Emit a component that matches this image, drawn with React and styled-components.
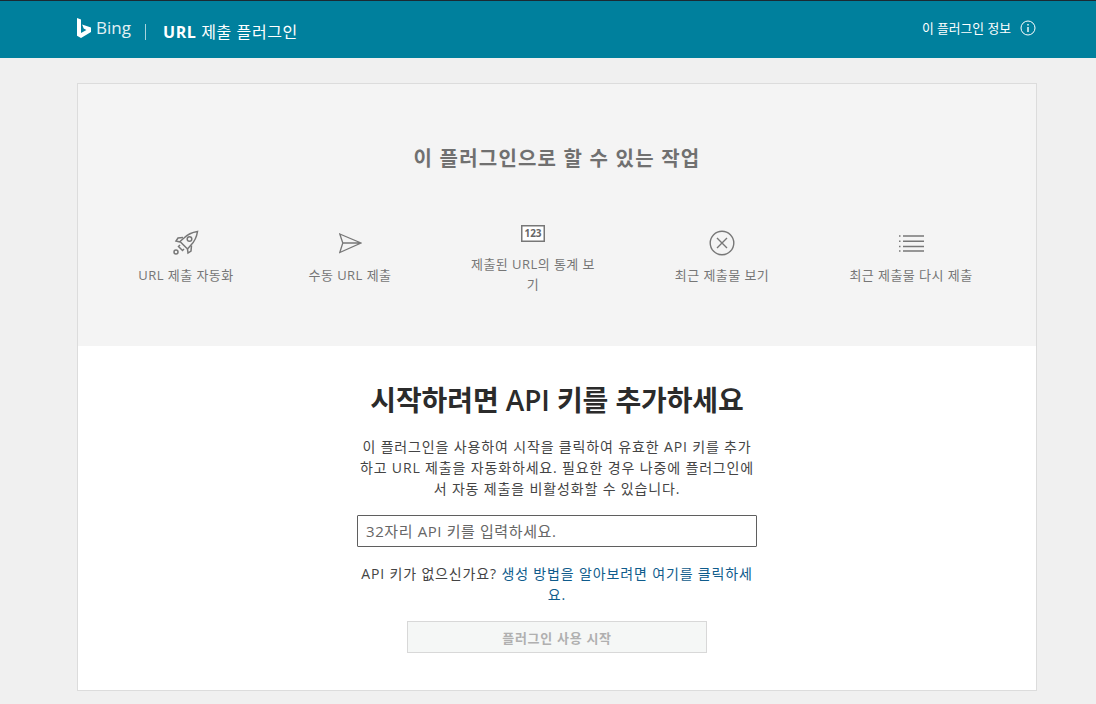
import React from "react";
import styled, { createGlobalStyle } from "styled-components";

const Global = createGlobalStyle`
  html, body {
    margin: 0;
    padding: 0;
    background: #f0f0f0;
    font-family: "Open Sans", "Noto Sans CJK KR", sans-serif;
  }
  * { box-sizing: border-box; }
`;

const Header = styled.header`
  height: 58px;
  background: #00809d;
  border-top: 1px solid #1b2a33;
  display: flex;
  align-items: center;
  justify-content: space-between;
  padding: 0 60px 4px 77px;
  color: #fff;
`;

const Brand = styled.div`
  display: flex;
  align-items: center;
`;

const BingWord = styled.span`
  font-size: 17px;
  margin-left: 4px;
  color: #e3f1f4;
`;

const Divider = styled.span`
  width: 1px;
  height: 16px;
  background: #a8d3dc;
  margin: 9px 17px 0 14px;
`;

const PluginName = styled.span`
  font-size: 16px;
  letter-spacing: 0.6px;
  margin-top: 6px;
  b {
    font-weight: 700;
  }
`;

const About = styled.div`
  display: flex;
  align-items: center;
  gap: 9px;
  font-size: 12.8px;
`;

const Card = styled.main`
  width: 960px;
  height: 608px;
  margin: 25px 0 0 77px;
  border: 1px solid #dcdcdc;
  background: #fff;
`;

const Features = styled.section`
  height: 262px;
  background: #f4f4f4;
  padding-top: 62px;
`;

const FeaturesTitle = styled.h2`
  margin: 0;
  text-align: center;
  font-size: 20px;
  line-height: 26px;
  letter-spacing: 1.2px;
  font-weight: 600;
  color: #707070;
`;

const FeatureRow = styled.div`
  display: grid;
  grid-template-columns: 164px 164px 202px 176px 202px;
  padding-left: 26px;
  margin-top: 57px;
`;

const Feature = styled.div`
  display: flex;
  flex-direction: column;
  align-items: center;
`;

const IconSlot = styled.div`
  height: ${({ $high }) => ($high ? "24px" : "28px")};
  margin-top: ${({ $high }) => ($high ? "-8px" : "0")};
  margin-bottom: ${({ $high }) => ($high ? "9px" : "8px")};
  display: flex;
  align-items: center;
  justify-content: center;
`;

const FeatureLabel = styled.div`
  width: ${({ $wrap }) => ($wrap ? "130px" : "auto")};
  font-size: 13px;
  line-height: 20px;
  letter-spacing: 0.45px;
  color: #767676;
  text-align: center;
  white-space: ${({ $wrap }) => ($wrap ? "normal" : "nowrap")};
  word-break: ${({ $wrap }) => ($wrap ? "break-all" : "normal")};
`;

const Start = styled.section`
  padding-top: 37px;
  display: flex;
  flex-direction: column;
  align-items: center;
`;

const StartTitle = styled.h1`
  margin: 0;
  font-size: 28px;
  line-height: 34px;
  letter-spacing: -0.1px;
  font-weight: 600;
  color: #2b2b2b;
`;

const Intro = styled.p`
  width: 400px;
  margin: 19px 0 0;
  font-size: 14px;
  line-height: 21px;
  letter-spacing: 0.85px;
  word-break: break-all;
  color: #444;
  text-align: center;
`;

const KeyInput = styled.input`
  width: 400px;
  height: 32px;
  margin-top: 16px;
  padding: 0 8px;
  border: 1px solid #5f5f5f;
  border-radius: 1px;
  background: #fff;
  font: inherit;
  font-size: 15px;
  letter-spacing: 0.6px;
  color: #555;
  &::placeholder {
    color: #666;
    opacity: 1;
  }
`;

const Help = styled.p`
  width: 400px;
  margin: 16px 0 0;
  font-size: 14px;
  line-height: 21px;
  letter-spacing: 0.85px;
  word-break: break-all;
  color: #444;
  text-align: center;
`;

const HelpLink = styled.a`
  color: #0f5c8c;
  text-decoration: none;
`;

const StartButton = styled.button`
  width: 300px;
  height: 32px;
  margin-top: 16px;
  border: 1px solid #d8d8d8;
  background: #f5f7f6;
  font: inherit;
  font-size: 13px;
  letter-spacing: 0.7px;
  font-weight: 600;
  color: #b0b0b0;
`;

const BingLogo = () => (
  <svg width="15" height="20" viewBox="0 0 15 20">
    <path d="M0 0l4 1.400v13.600l5.400-3.100-2.700-1.300-1.600-4L14 9.400v4.600L4 20 0 17.700z" fill="#fff" />
  </svg>
);

const InfoIcon = () => (
  <svg width="16" height="16" viewBox="0 0 16 16" fill="none" stroke="#fff">
    <circle cx="8" cy="8" r="7" />
    <path d="M8 7v5" strokeWidth="1.400" />
    <path d="M8 4v1.500" strokeWidth="1.400" />
  </svg>
);

const RocketIcon = () => (
  <svg width="26" height="26" viewBox="0 0 26 26" fill="none" stroke="#777" strokeWidth="1.500">
    <path d="M24.500 1.500C18 2.500 14 5 11 8l-4 3.500 7.500 7.500 3.500-4c3-3 5.500-7 6.500-13.500z" />
    <circle cx="16.500" cy="9" r="2.300" />
    <path d="M10 7.500L5 8l-2 3 4 1M18.500 15.500L18 21l-3 2-.5-4" />
    <path d="M7 15l-1.500 1.500 4 4L11 19" />
    <circle cx="3" cy="22" r="2" />
  </svg>
);

const SendIcon = () => (
  <svg width="23" height="21" viewBox="0 0 23 21" fill="none" stroke="#777" strokeWidth="1.300">
    <path d="M.8 1L22 10 .8 19.500 3.800 10zM3.800 10H22" />
  </svg>
);

const CountIcon = () => (
  <svg width="24" height="17" viewBox="0 0 24 17">
    <rect x=".75" y=".75" width="22.500" height="15.500" fill="#fff" stroke="#777" strokeWidth="1.500" />
    <text x="12" y="12" fontSize="10" fontWeight="700" textAnchor="middle" fill="#666" fontFamily="Open Sans, sans-serif">123</text>
  </svg>
);

const CloseCircleIcon = () => (
  <svg width="26" height="26" viewBox="0 0 26 26" fill="none" stroke="#777" strokeWidth="1.400">
    <circle cx="13" cy="13" r="11.800" />
    <path d="M8 8l10 10M18 8L8 18" />
  </svg>
);

const ListIcon = () => (
  <svg width="25" height="17" viewBox="0 0 25 17" stroke="#777" strokeWidth="1.500">
    <path d="M4 1h21M4 6.300h21M4 11.500h21M4 16h21" />
    <path d="M0 1h1.500M0 6.300h1.500M0 11.500h1.500M0 16h1.500" />
  </svg>
);

const features = [
  { label: "URL 제출 자동화", icon: <RocketIcon /> },
  { label: "수동 URL 제출", icon: <SendIcon /> },
  { label: "제출된 URL의 통계 보기", icon: <CountIcon />, high: true, wrap: true },
  { label: "최근 제출물 보기", icon: <CloseCircleIcon /> },
  { label: "최근 제출물 다시 제출", icon: <ListIcon /> },
];

export default function App() {
  return (
    <>
      <Global />
      <Header>
        <Brand>
          <BingLogo />
          <BingWord>Bing</BingWord>
          <Divider />
          <PluginName><b>URL</b> 제출 플러그인</PluginName>
        </Brand>
        <About>
          이 플러그인 정보
          <InfoIcon />
        </About>
      </Header>
      <Card>
        <Features>
          <FeaturesTitle>이 플러그인으로 할 수 있는 작업</FeaturesTitle>
          <FeatureRow>
            {features.map((f) => (
              <Feature key={f.label}>
                <IconSlot $high={f.high}>{f.icon}</IconSlot>
                <FeatureLabel $wrap={f.wrap}>{f.label}</FeatureLabel>
              </Feature>
            ))}
          </FeatureRow>
        </Features>
        <Start>
          <StartTitle>시작하려면 API 키를 추가하세요</StartTitle>
          <Intro>
            이 플러그인을 사용하여 시작을 클릭하여 유효한 API 키를 추가하고 URL 제출을 자동화하세요. 필요한 경우 나중에 플러그인에서 자동 제출을 비활성화할 수 있습니다.
          </Intro>
          <KeyInput placeholder="32자리 API 키를 입력하세요." readOnly />
          <Help>
            API 키가 없으신가요? <HelpLink href="#">생성 방법을 알아보려면 여기를 클릭하세요.</HelpLink>
          </Help>
          <StartButton disabled>플러그인 사용 시작</StartButton>
        </Start>
      </Card>
    </>
  );
}
